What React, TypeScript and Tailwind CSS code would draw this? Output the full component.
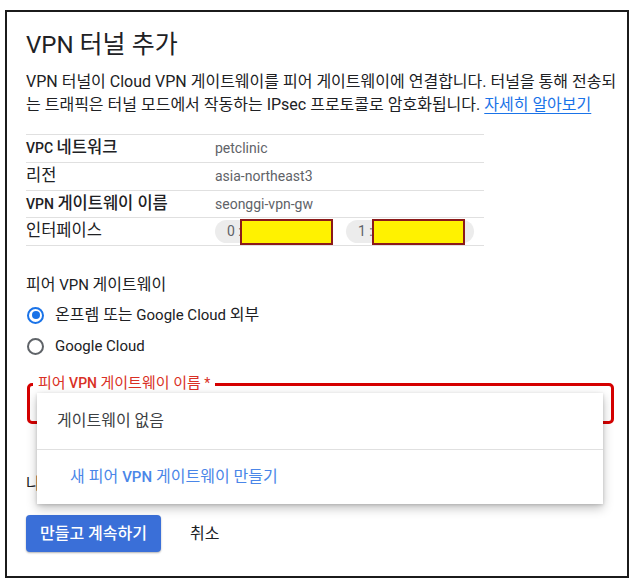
import React from "react";

const rows = [
  { pre: "VPC ", ko: "네트워크", value: "petclinic", bold: true, h: "h-[28px]" },
  { pre: "", ko: "리전", value: "asia-northeast3", bold: false, h: "h-[28px]" },
  { pre: "VPN ", ko: "게이트웨이 이름", value: "seonggi-vpn-gw", bold: true, h: "h-[27px]" },
];

const Redacted = () => (
  <span className="block w-[93px] h-[26px] border-2 border-[#8b1a1a] bg-[#fff200]" />
);

const App = () => {
  return (
    <div
      className="bg-white w-[635px] h-[582px] pt-[10px] pl-[5px]"
      style={{ fontFamily: "Roboto, 'Noto Sans CJK KR', sans-serif" }}
    >
      <div className="relative w-[624px] h-[568px] border-2 border-[#1b1b1b] pl-[19px] pt-[19px] text-[#202124]">
        <h1 className="h-[28px] leading-[28px] text-[24px] font-normal whitespace-nowrap">
          VPN <span className="text-[25px]">터널 추가</span>
        </h1>

        <p className="mt-[11px] text-[16px] leading-[23px] text-[#202124] whitespace-nowrap">
          VPN 터널이 Cloud VPN 게이트웨이를 피어 게이트웨이에 연결합니다. 터널을 통해 전송되
          <br />
          는 트래픽은 터널 모드에서 작동하는 IPsec 프로토콜로 암호화됩니다.{" "}
          <a className="text-[#1a73e8] underline underline-offset-[3px]">자세히 알아보기</a>
        </p>

        {/* 정보 테이블 */}
        <div className="mt-[18px] w-[458px] border-t border-[#e0e0e0] text-[14px]">
          {rows.map((r) => (
            <div key={r.ko} className={`flex items-center border-b border-[#e0e0e0] ${r.h}`}>
              <div className={`w-[189px] whitespace-nowrap ${r.bold ? "font-medium" : ""}`}>
                {r.pre}
                <span className="text-[16.5px]">{r.ko}</span>
              </div>
              <div className="text-[#5f6368]">{r.value}</div>
            </div>
          ))}
          <div className="flex items-center border-b border-[#e0e0e0] h-[28px]">
            <div className="w-[189px] text-[16.5px]">인터페이스</div>
            <div className="flex items-center text-[#5f6368] whitespace-nowrap">
              <div className="flex items-center h-[23px] rounded-full bg-[#ececec] pl-[12px]">
                <span className="w-[13px]">0 :</span>
                <Redacted />
              </div>
              <div className="ml-[13px] flex items-center h-[23px] rounded-full bg-[#ececec] pl-[12px] pr-[9px]">
                <span className="w-[14px]">1 :</span>
                <Redacted />
              </div>
            </div>
          </div>
        </div>

        {/* 피어 VPN 게이트웨이 */}
        <div className="mt-[29px] h-[20px] leading-[20px] text-[15px] whitespace-nowrap">
          <span className="text-[16px]">피어</span> VPN <span className="text-[16px]">게이트웨이</span>
        </div>
        <label className="mt-[8px] flex items-center h-[24px] text-[15px]">
          <span className="w-[17px] h-[17px] ml-px rounded-full border-2 border-[#1a73e8] flex items-center justify-center">
            <span className="w-[8px] h-[8px] rounded-full bg-[#1a73e8]" />
          </span>
          <span className="ml-[11px] whitespace-nowrap">
            <span className="text-[16px]">온프렘 또는</span> Google Cloud <span className="text-[16px]">외부</span>
          </span>
        </label>
        <label className="mt-[7px] flex items-center h-[24px] text-[15px]">
          <span className="w-[17px] h-[17px] ml-px rounded-full border-2 border-[#5f6368]" />
          <span className="ml-[11px]">Google Cloud</span>
        </label>

        {/* 입력 필드 */}
        <div className="relative mt-[25px] ml-px w-[587px] h-[41px] border-[3px] border-[#d50000] rounded-[5px]">
          <span className="absolute left-[3px] top-[-11px] bg-white px-[5px] text-[14px] leading-[16px] text-[#d93025] whitespace-nowrap">
            <span className="text-[15px]">피어</span> <span className="font-medium">VPN</span>{" "}
            <span className="text-[15px]">게이트웨이 이름</span> *
          </span>
        </div>

        <div className="mt-[50px] h-[20px] leading-[20px] text-[16px] text-[#202124]">나</div>

        <div className="mt-[21px] flex items-center">
          <button className="w-[135px] h-[37px] rounded-[4px] bg-[#3a6fd8] text-white text-[16px] font-medium shadow-[0_1px_2px_rgba(0,0,0,0.3)]">
            만들고 계속하기
          </button>
          <button className="ml-[29px] text-[16px] text-[#202124]">취소</button>
        </div>

        {/* 드롭다운 메뉴 */}
        <div className="absolute left-[30px] top-[381px] w-[566px] h-[111px] bg-white shadow-[0_4px_10px_rgba(0,0,0,0.25),0_1px_3px_rgba(0,0,0,0.15)]">
          <div className="h-[56px] flex items-center pl-[20px] text-[16px] text-[#3c4043]">게이트웨이 없음</div>
          <div className="h-px bg-[#e0e0e0]" />
          <div className="h-[54px] flex items-center pl-[33px] text-[16px] text-[#4a86e8] whitespace-nowrap">
            새 피어 <span className="font-medium text-[15px] mx-[4px]">VPN</span> 게이트웨이 만들기
          </div>
        </div>
      </div>
    </div>
  );
};

export default App;
